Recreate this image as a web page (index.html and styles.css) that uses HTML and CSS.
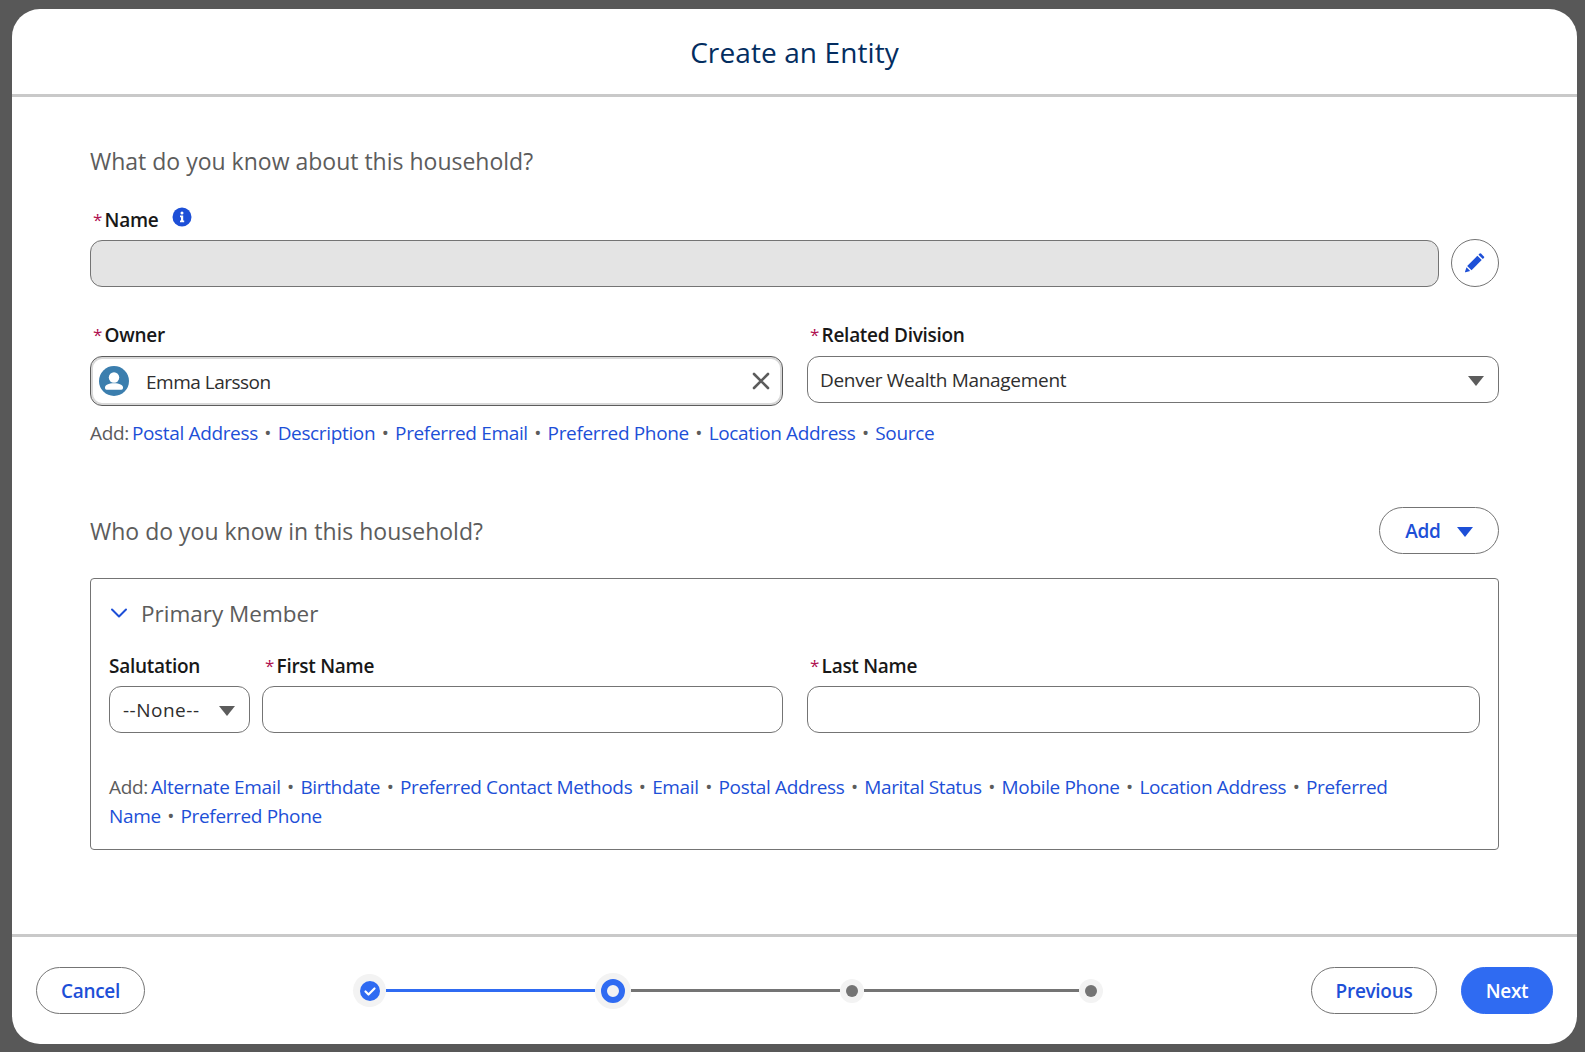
FILE: index.html
```html
<!DOCTYPE html>
<html lang="en">
<head>
    <meta charset="UTF-8">
    <meta name="viewport" content="width=device-width, initial-scale=1.0">
    <title>Create an Entity</title>
    <link rel="stylesheet" href="styles.css">
</head>
<body>
<div class="modal">
    <div class="modal-header">
        <h1>Create an Entity</h1>
    </div>

    <div class="modal-body">
        <h2 class="section-title first">What do you know about this household?</h2>

        <div class="field-label">
            <span class="req">*</span>Name
            <svg class="info-icon" viewBox="0 0 20 20" width="20" height="20">
                <circle cx="10" cy="10" r="9.5" fill="#1d4fd7"/>
                <circle cx="10" cy="6" r="1.5" fill="#fff"/>
                <path d="M8 8.600h3.200v5h1v1.600H8v-1.600h1v-3.400H8z" fill="#fff"/>
            </svg>
        </div>
        <div class="name-row">
            <input type="text" class="form-control disabled" disabled>
            <button class="icon-btn">
                <svg viewBox="0 0 20 20" width="20" height="20">
                    <path d="M14.600.600a1 1 0 0 1 1.400 0l2.900 2.900a1 1 0 0 1 0 1.400l-1.100 1.100-4.300-4.300z" fill="#1d4fd7"/>
                    <path d="M12.400 2.800l4.300 4.300L6.500 17.300l-4.300-4.300z" fill="#1d4fd7"/>
                    <path d="M1.500 14.300l3.700 3.700-4.600 1.300a.5.5 0 0 1-.6-.6z" fill="#1d4fd7"/>
                </svg>
            </button>
        </div>

        <div class="two-col owner-row">
            <div>
                <div class="field-label"><span class="req">*</span>Owner</div>
                <div class="lookup">
                    <svg class="avatar" viewBox="0 0 30 30" width="30" height="30">
                        <circle cx="15" cy="15" r="15" fill="#3b7eae"/>
                        <circle cx="15" cy="11.500" r="5.200" fill="#fff"/>
                        <path d="M6 21.500c0-2.600 3.600-4.300 9-4.300s9 1.700 9 4.300v.6a1.600 1.600 0 0 1-1.600 1.600H7.600A1.600 1.600 0 0 1 6 22.100z" fill="#fff"/>
                    </svg>
                    <span class="lookup-name">Emma Larsson</span>
                    <svg class="clear-icon" viewBox="0 0 18 18" width="18" height="18">
                        <path d="M2 2l14 14M16 2L2 16" stroke="#5c5c5c" stroke-width="2.600" stroke-linecap="round" fill="none"/>
                    </svg>
                </div>
            </div>
            <div>
                <div class="field-label"><span class="req">*</span>Related Division</div>
                <div class="form-control select">
                    <span>Denver Wealth Management</span>
                    <span class="caret"></span>
                </div>
            </div>
        </div>

        <div class="add-links">
            <span class="add-word">Add:</span> <a>Postal Address</a><i>•</i><a>Description</a><i>•</i><a>Preferred Email</a><i>•</i><a>Preferred Phone</a><i>•</i><a>Location Address</a><i>•</i><a>Source</a>
        </div>

        <div class="section-row">
            <h2 class="section-title">Who do you know in this household?</h2>
            <button class="btn add-btn">Add<span class="caret blue"></span></button>
        </div>

        <div class="member-panel">
            <div class="member-head">
                <svg viewBox="0 0 18 12" width="18" height="12">
                    <path d="M2 2.500l7 7 7-7" stroke="#1d4fd7" stroke-width="2" stroke-linecap="round" stroke-linejoin="round" fill="none"/>
                </svg>
                <span>Primary Member</span>
            </div>

            <div class="member-fields">
                <div class="name-pair">
                    <div>
                        <div class="field-label">Salutation</div>
                        <div class="form-control select salutation">
                            <span>--None--</span>
                            <span class="caret"></span>
                        </div>
                    </div>
                    <div>
                        <div class="field-label"><span class="req">*</span>First Name</div>
                        <input type="text" class="form-control">
                    </div>
                </div>
                <div>
                    <div class="field-label"><span class="req">*</span>Last Name</div>
                    <input type="text" class="form-control">
                </div>
            </div>

            <div class="add-links member-links">
                <span class="add-word">Add:</span> <a>Alternate Email</a><i>•</i><a>Birthdate</a><i>•</i><a>Preferred Contact Methods</a><i>•</i><a>Email</a><i>•</i><a>Postal Address</a><i>•</i><a>Marital Status</a><i>•</i><a>Mobile Phone</a><i>•</i><a>Location Address</a><i>•</i><a>Preferred</a><br>
                <a>Name</a><i>•</i><a>Preferred Phone</a>
            </div>
        </div>
    </div>

    <div class="modal-footer">
        <button class="btn cancel-btn">Cancel</button>

        <div class="progress">
            <span class="step done">
                <svg viewBox="0 0 20 20" width="20" height="20">
                    <circle cx="10" cy="10" r="10" fill="#2f6bf2"/>
                    <path d="M5.500 10.500l3 3 6-6" stroke="#fff" stroke-width="2.200" stroke-linecap="round" stroke-linejoin="round" fill="none"/>
                </svg>
            </span>
            <span class="bar active"></span>
            <span class="step current"><span></span></span>
            <span class="bar"></span>
            <span class="step todo"><span></span></span>
            <span class="bar long"></span>
            <span class="step todo"><span></span></span>
        </div>

        <div class="footer-right">
            <button class="btn prev-btn">Previous</button>
            <button class="btn next-btn">Next</button>
        </div>
    </div>
</div>
</body>
</html>
```

FILE: styles.css
```css
:root {
    --backdrop: #585858;
    --link: #1d4fd7;
    --primary: #2f6bf2;
    --border: #747474;
    --divider: #c9c9c9;
    --muted: #5c5c5c;
    --text: #181818;
}

* {
    margin: 0;
    padding: 0;
    box-sizing: border-box;
    font-family: 'Open Sans', 'Noto Sans', sans-serif;
}

body {
    background-color: var(--backdrop);
    height: 1052px;
    overflow: hidden;
    padding: 9px 8px 8px 12px;
    color: var(--text);
}

.modal {
    background-color: #fff;
    border-radius: 28px;
    height: 1035px;
    display: flex;
    flex-direction: column;
}

.modal-header {
    height: 88px;
    border-bottom: 3px solid var(--divider);
    display: flex;
    justify-content: center;
    align-items: center;
}

.modal-header h1 {
    font-size: 28px;
    font-weight: 400;
    letter-spacing: 0.1px;
    color: #032d60;
}

.modal-body {
    flex: 1;
    padding: 0 78px;
}

.section-title {
    font-size: 23px;
    font-weight: 400;
    line-height: 30px;
    color: var(--muted);
}

.section-title.first {
    margin-top: 49px;
    margin-bottom: 32px;
}

.field-label {
    font-size: 19px;
    font-weight: 600;
    line-height: 24px;
    letter-spacing: -0.28px;
    margin-bottom: 8px;
    display: flex;
    align-items: center;
}

.req {
    color: #b01050;
    font-size: 17px;
    font-weight: 400;
    margin: 0 2.5px 0 3px;
}

.info-icon {
    margin-left: 14px;
    margin-top: -6px;
}

.form-control {
    width: 100%;
    height: 47px;
    background-color: #fff;
    border: 1px solid var(--border);
    border-radius: 12px;
    font-size: 19px;
    letter-spacing: -0.3px;
    color: #2e2e2e;
    padding: 0 12px;
}

.form-control.disabled {
    background-color: #e4e4e4;
}

.select {
    display: flex;
    justify-content: space-between;
    align-items: center;
}

.salutation {
    letter-spacing: 0.5px;
    padding-left: 13px;
}

.caret {
    display: inline-block;
    width: 0;
    height: 0;
    border-left: 8px solid transparent;
    border-right: 8px solid transparent;
    border-top: 10px solid var(--muted);
    margin: 2px 2px 0 0;
}

.caret.blue {
    border-top-color: var(--link);
    margin: 2px 0 0 16px;
}

.name-row {
    display: flex;
    gap: 12px;
}

.icon-btn {
    flex: none;
    width: 48px;
    height: 48px;
    margin-top: -1px;
    background: #fff;
    border: 1px solid var(--border);
    border-radius: 50%;
    display: flex;
    justify-content: center;
    align-items: center;
}

.two-col {
    display: grid;
    grid-template-columns: 693px 692px;
    gap: 24px;
}

.owner-row {
    margin-top: 36px;
    align-items: start;
}

.owner-row .field-label {
    margin-bottom: 9px;
}

.lookup {
    height: 50px;
    border: 1px solid #5c5c5c;
    border-radius: 12px;
    box-shadow: inset 0 0 0 2px #d8d8d8;
    display: flex;
    align-items: center;
    padding: 0 12px 0 8px;
    font-size: 19px;
}

.lookup-name {
    flex: 1;
    margin-left: 17px;
    padding-top: 2px;
    letter-spacing: -0.5px;
    color: #2e2e2e;
}

.add-links {
    font-size: 19px;
    line-height: 29px;
    letter-spacing: -0.35px;
    color: var(--muted);
    margin-top: 13px;
}

.add-word {
    margin-right: -1.5px;
}

.add-links a {
    color: var(--link);
}

.add-links i {
    font-style: normal;
    margin: 0 6.5px;
}

.section-row {
    display: flex;
    justify-content: space-between;
    align-items: center;
    margin-top: 59px;
}

.btn {
    height: 47px;
    background: #fff;
    border: 1px solid var(--border);
    border-radius: 24px;
    font-size: 19px;
    font-weight: 600;
    letter-spacing: -0.3px;
    color: var(--link);
    display: inline-flex;
    justify-content: center;
    align-items: center;
}

.add-btn {
    width: 120px;
}

.member-panel {
    margin-top: 24px;
    height: 272px;
    border: 1px solid var(--border);
    border-radius: 4px;
    padding: 0 18px;
}

.member-head {
    height: 68px;
    display: flex;
    align-items: center;
    gap: 13px;
    font-size: 22.500px;
    color: var(--muted);
}

.member-head svg {
    margin-left: 1px;
}

.member-fields {
    display: grid;
    grid-template-columns: 674px 673px;
    gap: 24px;
    margin-top: 7px;
}

.name-pair {
    display: grid;
    grid-template-columns: 141px 521px;
    gap: 12px;
}

.member-links {
    margin-top: 40px;
}

.modal-footer {
    height: 110px;
    border-top: 3px solid var(--divider);
    padding: 30px 24px 0;
    display: flex;
    align-items: flex-start;
}

.cancel-btn {
    width: 109px;
}

.progress {
    display: flex;
    align-items: center;
    height: 47px;
    margin-left: 208px;
}

.step {
    flex: none;
    background-color: #f3f3f3;
    border-radius: 50%;
    display: flex;
    justify-content: center;
    align-items: center;
}

.step.done {
    width: 33px;
    height: 33px;
}

.step.current {
    width: 36px;
    height: 36px;
}

.step.current span {
    width: 24px;
    height: 24px;
    border: 6px solid var(--primary);
    background-color: #f3f3f3;
    border-radius: 50%;
}

.step.todo {
    width: 24px;
    height: 24px;
}

.step.todo span {
    width: 12px;
    height: 12px;
    background-color: #747474;
    border-radius: 50%;
}

.bar {
    height: 3px;
    width: 209px;
    background-color: #747474;
}

.bar.long {
    width: 215px;
}

.bar.active {
    background-color: var(--primary);
    width: 209px;
}

.footer-right {
    margin-left: auto;
    display: flex;
    gap: 24px;
}

.prev-btn {
    width: 126px;
}

.next-btn {
    width: 92px;
    background-color: var(--primary);
    border-color: var(--primary);
    color: #fff;
}
```
